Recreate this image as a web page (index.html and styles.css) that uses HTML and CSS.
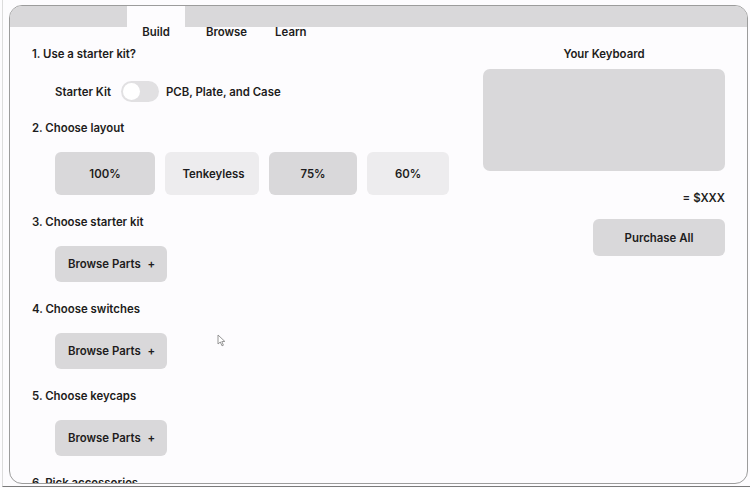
FILE: index.html
```html
<!DOCTYPE html>
<html>
<head>
<meta charset="utf-8">
<link rel="stylesheet" href="styles.css">
</head>
<body>
<div class="screen">
  <div class="frame">
    <header class="tabs">
      <div class="tab tab-build active"><span class="tab-top"></span><span class="tab-label">Build</span></div>
      <div class="tab tab-browse"><span class="tab-top"></span><span class="tab-label">Browse</span></div>
      <div class="tab tab-learn"><span class="tab-top"></span><span class="tab-label">Learn</span></div>
    </header>
    <main class="main">
      <section class="steps">
        <div class="step step-first">
          <h2 class="heading">1. Use a starter kit?</h2>
          <div class="toggle-row">
            <span>Starter Kit</span>
            <span class="toggle"><span class="knob"></span></span>
            <span>PCB, Plate, and Case</span>
          </div>
        </div>
        <div class="step">
          <h2 class="heading">2. Choose layout</h2>
          <div class="layouts">
            <button class="layout dark w100">100%</button>
            <button class="layout light wtkl">Tenkeyless</button>
            <button class="layout dark w75">75%</button>
            <button class="layout light w60">60%</button>
          </div>
        </div>
        <div class="step">
          <h2 class="heading">3. Choose starter kit</h2>
          <div class="indent"><button class="browse">Browse Parts <span class="plus">+</span></button></div>
        </div>
        <div class="step">
          <h2 class="heading">4. Choose switches</h2>
          <div class="indent"><button class="browse">Browse Parts <span class="plus">+</span></button></div>
        </div>
        <div class="step">
          <h2 class="heading">5. Choose keycaps</h2>
          <div class="indent"><button class="browse">Browse Parts <span class="plus">+</span></button></div>
        </div>
        <div class="step">
          <h2 class="heading">6. Pick accessories</h2>
        </div>
      </section>
      <aside class="summary">
        <h2 class="heading center">Your Keyboard</h2>
        <div class="preview"></div>
        <div class="total">= $XXX</div>
        <button class="purchase">Purchase All</button>
      </aside>
    </main>
    <svg class="cursor" width="9" height="13" viewBox="0 0 9 13"><path d="M1 1 L1 10 L3.3 8 L5 11.8 L6.4 11.2 L4.8 7.6 L7.8 7.4 Z" fill="#fff" stroke="#8a8a8a" stroke-width="0.9" stroke-linejoin="round"/></svg>
  </div>
</div>
</body>
</html>
```

FILE: styles.css
```css
* { box-sizing: border-box; }
html, body { margin: 0; padding: 0; background: #fdfcfe; }
body {
  font-family: Inter, "Noto Sans", sans-serif;
  font-size: 11.4px;
  font-weight: 600;
  color: #1d1c20;
  width: 750px;
  height: 488px;
  overflow: hidden;
}
.screen {
  margin-left: 2px;
  height: 487px;
  border-left: 1px solid #dcdcdc;
  border-bottom: 1px solid #7a7a7a;
  padding-top: 5px;
  padding-left: 6px;
}
.frame {
  position: relative;
  width: 739px;
  height: 479px;
  border: 1.5px solid #9c9c9c;
  border-radius: 13px;
  overflow: hidden;
  background: #fdfcfe;
}
.tabs {
  display: flex;
  padding-left: 117px;
  background: linear-gradient(#d9d8da 21px, transparent 21px);
}
.tab { display: flex; flex-direction: column; align-items: center; }
.tab-top { height: 21px; width: 100%; }
.tab.active .tab-top { background: #fdfcfe; }
.tab-label { line-height: 10px; height: 10px; }
.tab-build { width: 58px; }
.tab-browse { margin-left: 21px; }
.tab-learn { margin-left: 28px; }

.main {
  display: flex;
  justify-content: space-between;
  padding: 10px 22px 0 22px;
}
.steps { display: flex; flex-direction: column; gap: 20px; width: 430px; }
.step { display: flex; flex-direction: column; gap: 17px; }
.step-first { gap: 20px; margin-bottom: -1px; }
.heading { margin: 0; font-size: 11.4px; font-weight: 600; line-height: 14px; }
.heading.center { text-align: center; }

.toggle-row { display: flex; align-items: center; padding-left: 23px; height: 21px; }
.toggle {
  width: 38px; height: 21px; border-radius: 11px; background: #e1e0e2;
  display: flex; align-items: center; padding-left: 2px;
  margin: 0 7px 0 10px;
}
.knob { width: 17px; height: 17px; border-radius: 50%; background: #fff; }

button {
  font: inherit; color: inherit; border: none; cursor: default; padding: 0;
}
.layouts { display: flex; gap: 10px; padding-left: 23px; }
.layout { height: 43px; border-radius: 6px; }
.layout.dark { background: #d9d8da; }
.layout.light { background: #edecee; }
.w100 { width: 100px; }
.wtkl { width: 94px; padding-left: 3px; }
.w75 { width: 88px; }
.w60 { width: 82px; }

.indent { padding-left: 23px; }
.browse {
  width: 112px; height: 36px; border-radius: 6px; background: #d9d8da;
  text-align: left; padding-left: 13px;
}
.plus { margin-left: 4px; }

.summary { width: 242px; display: flex; flex-direction: column; }
.preview { margin-top: 8px; height: 102px; border-radius: 7px; background: #d9d8da; }
.total { margin-top: 20px; text-align: right; line-height: 14px; }
.purchase {
  margin-top: 14px; align-self: flex-end; width: 132px; height: 37px;
  border-radius: 6px; background: #d9d8da;
}
.cursor { position: absolute; left: 207px; top: 328px; }
```
